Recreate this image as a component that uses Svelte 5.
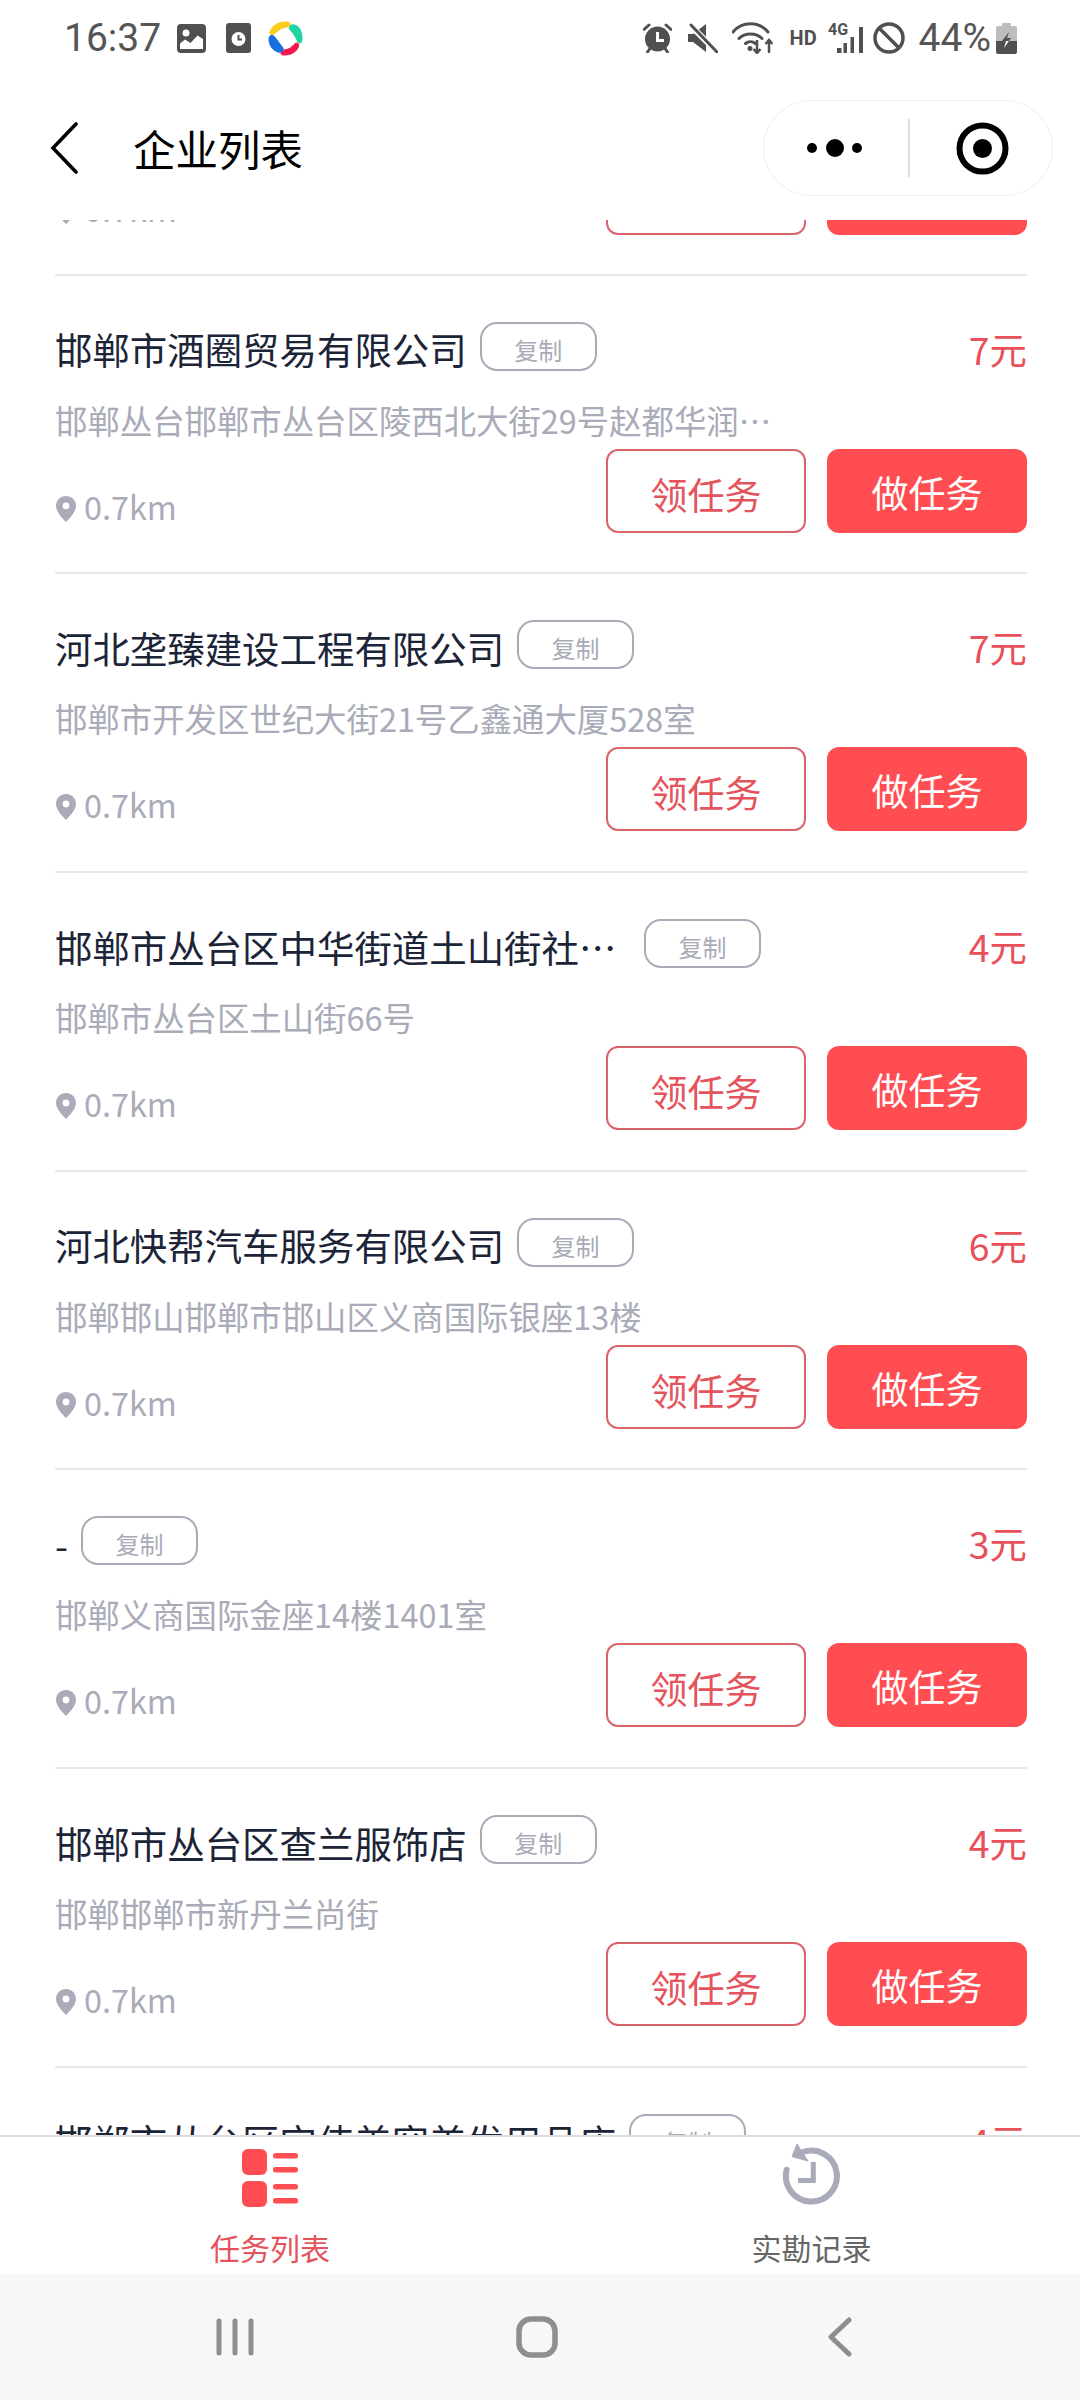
<script>
  const items = [
    { name: '邯郸市酒圈贸易有限公司', addr: '邯郸丛台邯郸市丛台区陵西北大街29号赵都华润…', price: '7元' },
    { name: '河北垄臻建设工程有限公司', addr: '邯郸市开发区世纪大街21号乙鑫通大厦528室', price: '7元' },
    { name: '邯郸市丛台区中华街道土山街社…', addr: '邯郸市丛台区土山街66号', price: '4元', long: true },
    { name: '河北快帮汽车服务有限公司', addr: '邯郸邯山邯郸市邯山区义商国际银座13楼', price: '6元' },
    { name: '-', addr: '邯郸义商国际金座14楼1401室', price: '3元' },
    { name: '邯郸市丛台区查兰服饰店', addr: '邯郸邯郸市新丹兰尚街', price: '4元' },
    { name: '邯郸市丛台区宝伟美容美发用品店', addr: '', price: '4元' }
  ];
</script>

{#snippet actions()}
  <div class="actions">
    <div class="km">
      <svg class="pin" width="20" height="26" viewBox="0 0 20 26"><path fill-rule="evenodd" d="M10 0C4.5 0 0 4.4 0 9.8 0 16 6.5 22.5 10 26c3.500-3.500 10-10 10-16.200C20 4.400 15.500 0 10 0zm0 6.500a3.400 3.400 0 1 1 0 6.800 3.400 3.400 0 0 1 0-6.800z"/></svg>
      <span>0.7km</span>
    </div>
    <div class="btns">
      <div class="btn outline">领任务</div>
      <div class="btn solid">做任务</div>
    </div>
  </div>
{/snippet}

<div class="page">
  <div class="status">
    <div class="group left">
      <span class="time">16:37</span>
      <svg width="29" height="29" viewBox="0 0 29 29"><rect width="29" height="29" rx="4" fill="#505050"/><circle cx="9" cy="9" r="3.500" fill="#fff"/><path d="M3 25V19.500l5-4 5.500 3.500 7-7.500L26 15v10z" fill="#fff"/></svg>
      <svg class="g1" width="25" height="30" viewBox="0 0 25 30"><rect width="25" height="30" rx="3" fill="#505050"/><circle cx="12.500" cy="16" r="7" fill="#fff"/><path d="M12.500 12v4.500h3.500" fill="none" stroke="#505050" stroke-width="2"/></svg>
      <svg class="g2" width="35" height="35" viewBox="0 0 35 35" stroke-width="1" stroke-linejoin="round">
        <path fill="#f9cd1b" stroke="#f9cd1b" d="M2 11C4 4 11 1 18 1c3 0 5 1 4 3-1 2-4 2-7 3-4 1-6 4-9 6-3 1-5 0-4-2z"/>
        <path fill="#1fd3a2" stroke="#1fd3a2" d="M22 5c2-2 5-1 7 0 4 3 5 8 5 13 0 4-2 5-4 3-2-3-3-7-6-10-2-2-4-4-2-6z"/>
        <path fill="#f5184f" stroke="#f5184f" d="M29 22c2 0 2 3 1 5-3 5-8 7-14 7-3 0-3-1-3-3 1-2 4-2 7-3 4-1 6-6 9-6z"/>
        <path fill="#1a6fe0" stroke="#1a6fe0" d="M2 15c3-2 5 1 7 4 2 3 4 5 6 8 1 3-2 5-5 4C4 29 1 24 1 18c0-1 0-2 1-3z"/>
      </svg>
    </div>
    <div class="group right">
      <svg width="29" height="30" viewBox="0 0 29 30"><circle cx="14.500" cy="16" r="12.500" fill="#505050"/><path d="M14.500 9v8.500h6.500" fill="none" stroke="#fff" stroke-width="3"/><path d="M1 6.500l5-4.500M28 6.500L23 2M4.500 29l2.500-3.500M24.500 29L22 25.500" stroke="#505050" stroke-width="3" stroke-linecap="round"/></svg>
      <svg class="g16" width="30" height="30" viewBox="0 0 30 30"><path d="M0 11h5L18 1v28L5 19H0z" fill="#505050"/><path d="M2 2l27 27" stroke="#fff" stroke-width="6"/><path d="M3 2l26 27" stroke="#505050" stroke-width="3" stroke-linecap="round"/></svg>
      <svg class="g14" width="41" height="32" viewBox="0 0 41 32"><g fill="none" stroke="#505050" stroke-width="3" stroke-linecap="round"><path d="M1 10C10 -1 27 -1 36 10"/><path d="M7 16.500c6-6 17-6 23 0"/><path d="M13.500 21.500c3-2.500 7-2.500 10 0"/></g><circle cx="18" cy="26.500" r="2.500" fill="#505050"/><path d="M25 18v13M21.500 27l3.500 4 3.500-4M37 31V18M33.500 22l3.500-4 3.500 4" fill="none" stroke="#505050" stroke-width="2.500"/></svg>
      <span class="hd">HD</span>
      <svg class="g13" width="36" height="36" viewBox="0 -4 36 36"><text x="0" y="13" class="fourg">4G</text><g fill="#505050"><rect x="9" y="26" width="4.500" height="5"/><rect x="15.500" y="21" width="3.500" height="10"/><rect x="22.500" y="15" width="3.500" height="16"/><rect x="31" y="5" width="4" height="26"/></g></svg>
      <svg class="g9" width="32" height="32" viewBox="0 0 32 32"><circle cx="16" cy="16" r="14" fill="none" stroke="#505050" stroke-width="3.500"/><path d="M6 6l20 20" stroke="#505050" stroke-width="3.500"/></svg>
      <span class="pct">44%</span>
      <svg class="g6" width="21" height="31" viewBox="0 0 21 31">
        <defs><clipPath id="bt"><rect width="21" height="18"/></clipPath><clipPath id="bb"><rect y="18" width="21" height="13"/></clipPath></defs>
        <path d="M6 0h9v3h4a2 2 0 0 1 2 2v13H0V5a2 2 0 0 1 2-2h4z" fill="#bdbdbd"/>
        <path d="M0 18h21v11a2 2 0 0 1-2 2H2a2 2 0 0 1-2-2z" fill="#505050"/>
        <path clip-path="url(#bt)" d="M13 9L6 18h4l-2 7 7-10h-4l2-6z" fill="#505050"/>
        <path clip-path="url(#bb)" d="M13 9L6 18h4l-2 7 7-10h-4l2-6z" fill="#fff"/>
      </svg>
    </div>
  </div>

  <header class="header">
    <svg class="back" width="28" height="52" viewBox="0 0 28 52"><path d="M26 2L3 26l23 24" fill="none" stroke="#000" stroke-width="3.600" stroke-linecap="round"/></svg>
    <div class="title">企业列表</div>
    <div class="capsule">
      <div class="dots"><i></i><i class="big"></i><i></i></div>
      <div class="sep"></div>
      <svg width="53" height="53" viewBox="0 0 53 53"><circle cx="26.500" cy="26.500" r="23" fill="none" stroke="#000" stroke-width="6"/><circle cx="26.500" cy="26.500" r="9.500" fill="#000"/></svg>
    </div>
  </header>

  <main class="list">
    <div class="scroller">
      <div class="item clipped">
        {@render actions()}
      </div>
      {#each items as it}
        <div class="item">
          <div class="head">
            <div class="name-wrap">
              <span class="name" class:long={it.long}>{it.name}</span>
              <span class="copy">复制</span>
            </div>
            <span class="price">{it.price}</span>
          </div>
          {#if it.addr}
            <div class="addr">{it.addr}</div>
            {@render actions()}
          {/if}
        </div>
      {/each}
    </div>
  </main>

  <nav class="tabs">
    <div class="tab active">
      <svg width="56" height="58" viewBox="0 0 56 58" fill="#ff4d52"><rect width="25" height="26" rx="6"/><rect y="32" width="25" height="26" rx="6"/><rect x="31" y="4" width="25" height="5.500" rx="2.500"/><rect x="31" y="18" width="25" height="5.500" rx="2.500"/><rect x="31" y="35" width="25" height="5.500" rx="2.500"/><rect x="31" y="49" width="25" height="5.500" rx="2.500"/></svg>
      <span>任务列表</span>
    </div>
    <div class="tab second">
      <svg class="record" width="60" height="64" viewBox="0 0 60 64"><path d="M4.700 26.700A25.500 25.500 0 1 0 21 9" fill="none" stroke="#a9abbb" stroke-width="6" stroke-linecap="round"/><path d="M15 1l-5 12.500L26 18z" fill="#a9abbb" stroke="#a9abbb" stroke-width="1" stroke-linejoin="round"/><path d="M31.300 19V37.500H16" fill="none" stroke="#a9abbb" stroke-width="5"/></svg>
      <span>实勘记录</span>
    </div>
  </nav>

  <div class="sysnav">
    <svg width="40" height="38" viewBox="0 0 40 38"><g stroke="#8e8e8e" stroke-width="5" stroke-linecap="round"><path d="M3 3v32M19 3v32M35 3v32"/></g></svg>
    <svg width="42" height="42" viewBox="0 0 42 42"><rect x="3" y="3" width="36" height="36" rx="12" fill="none" stroke="#8e8e8e" stroke-width="5.500"/></svg>
    <svg width="24" height="40" viewBox="0 0 24 40"><path d="M21 3L3 20l18 17" fill="none" stroke="#8e8e8e" stroke-width="5" stroke-linecap="round" stroke-linejoin="round"/></svg>
  </div>
</div>

<style>
  :global(body) { margin: 0; background: #fff; }
  .page {
    width: 1080px; height: 2400px; display: flex; flex-direction: column; overflow: hidden;
    background: #fff; font-family: "Noto Sans CJK SC", "Noto Sans", sans-serif;
  }
  .status {
    height: 68px; flex: none; display: flex; justify-content: space-between; align-items: flex-start;
    padding: 22px 63px 0 64px; box-sizing: border-box;
  }
  .group { display: flex; align-items: center; height: 32px; }
  .group.left { gap: 19px; }
  .group.left .g1 { margin-left: 1px; }
  .group.left .g2 { margin-left: -2px; }
  .time, .pct { font: 400 39px/32px Roboto, sans-serif; color: #555; white-space: nowrap; }
  .time { width: 94px; }
  .group.right svg { flex: none; }
  .group.right { gap: 0; }
  .g16 { margin-left: 16px; }
  .g14 { margin-left: 14px; }
  .hd { margin-left: 17px; font: 700 20px/24px Roboto, sans-serif; color: #505050; width: 25px; }
  .g13 { margin: 0 0 4px 13px; }
  .fourg { font: 700 16px Roboto, sans-serif; fill: #505050; }
  .g9 { margin-left: 9px; }
  .pct { margin-left: 14px; }
  .g6 { margin-left: 5px; }

  .header {
    height: 152px; flex: none; display: flex; align-items: center; box-sizing: border-box;
    padding: 8px 27px 0 50px; background: #fff;
  }
  .title { margin-left: 55px; font-size: 42.500px; line-height: 60px; color: #000; flex: 1; }
  .capsule {
    width: 290px; height: 96px; box-sizing: border-box; border: 1.500px solid #eee; border-radius: 48px;
    display: flex; align-items: center; background: #fff;
  }
  .dots { width: 141px; margin-right: 3px; display: flex; align-items: center; justify-content: center; gap: 8.500px; }
  .dots i { width: 10px; height: 10px; border-radius: 50%; background: #000; }
  .dots i.big { width: 18px; height: 18px; }
  .sep { width: 2px; height: 58px; background: #ddd; margin-right: 46px; }

  .list { flex: 1; min-height: 0; overflow: hidden; padding: 0 53px 0 55px; }
  .scroller { margin-top: -69px; }
  .item {
    box-sizing: border-box; height: 298.700px; padding-top: 46px; border-bottom: 2px solid #e6e6e6;
  }
  .item.clipped { height: 124.700px; padding-top: 0; }
  .head { display: flex; justify-content: space-between; align-items: center; height: 49px; }
  .name-wrap { display: flex; align-items: center; gap: 13px; min-width: 0; }
  .name {
    font-size: 37.440px; line-height: 50px; color: #1c2438; white-space: nowrap; padding-top: 6px;
  }
  .name.long { width: 576px; }
  .copy {
    flex: none; box-sizing: border-box; width: 117px; height: 49px; border: 2px solid #a9abb8; border-radius: 17px;
    font-size: 24px; line-height: 46px; text-align: center; color: #a9abb8; padding-top: 3px;
  }
  .price { font-size: 37.440px; line-height: 50px; color: #e8505a; margin-top: 5px; }
  .addr {
    margin-top: 29px; font-size: 32.400px; line-height: 40px; color: #a9abb8; white-space: nowrap;
  }
  .actions { margin-top: 9px; height: 84px; display: flex; justify-content: space-between; }
  .item.clipped .actions { margin-top: 0; }
  .km { align-self: flex-end; margin-bottom: 7px; display: flex; align-items: center; gap: 8px; font-size: 32.400px; line-height: 40px; color: #a9abb8; }
  .pin { fill: #a9abb8; margin: 6px 0 0 1px; }
  .btns { display: flex; gap: 21px; }
  .btn {
    box-sizing: border-box; width: 200px; height: 84px; border-radius: 12px; font-size: 37px;
    display: flex; align-items: center; justify-content: center;
  }
  .outline { border: 2px solid #d9646b; color: #e5535c; background: #fff; padding-top: 6px; }
  .solid { background: #ff4d52; color: #fff; padding-top: 2px; }

  .tabs {
    height: 139px; flex: none; box-sizing: border-box; border-top: 2px solid #ddd; background: #fff;
    display: flex;
  }
  .tab {
    flex: 1; height: 137px; display: flex; flex-direction: column; align-items: center;
    font-size: 30px; line-height: 40px; color: #666; padding-top: 12px; box-sizing: border-box; justify-content: space-between;
  }
  .tab span { margin-bottom: 7px; }
  .tab.second span { margin-left: 3px; }
  .tab.active { color: #e5535c; }
  .record { margin: -6px 0 0 4px; }
  .sysnav {
    height: 126px; flex: none; background: #f7f7f7; display: flex; align-items: center;
    padding-left: 216px; box-sizing: border-box;
  }
  .sysnav svg:nth-child(2) { margin-left: 260px; }
  .sysnav svg:nth-child(3) { margin-left: 270px; }
</style>
